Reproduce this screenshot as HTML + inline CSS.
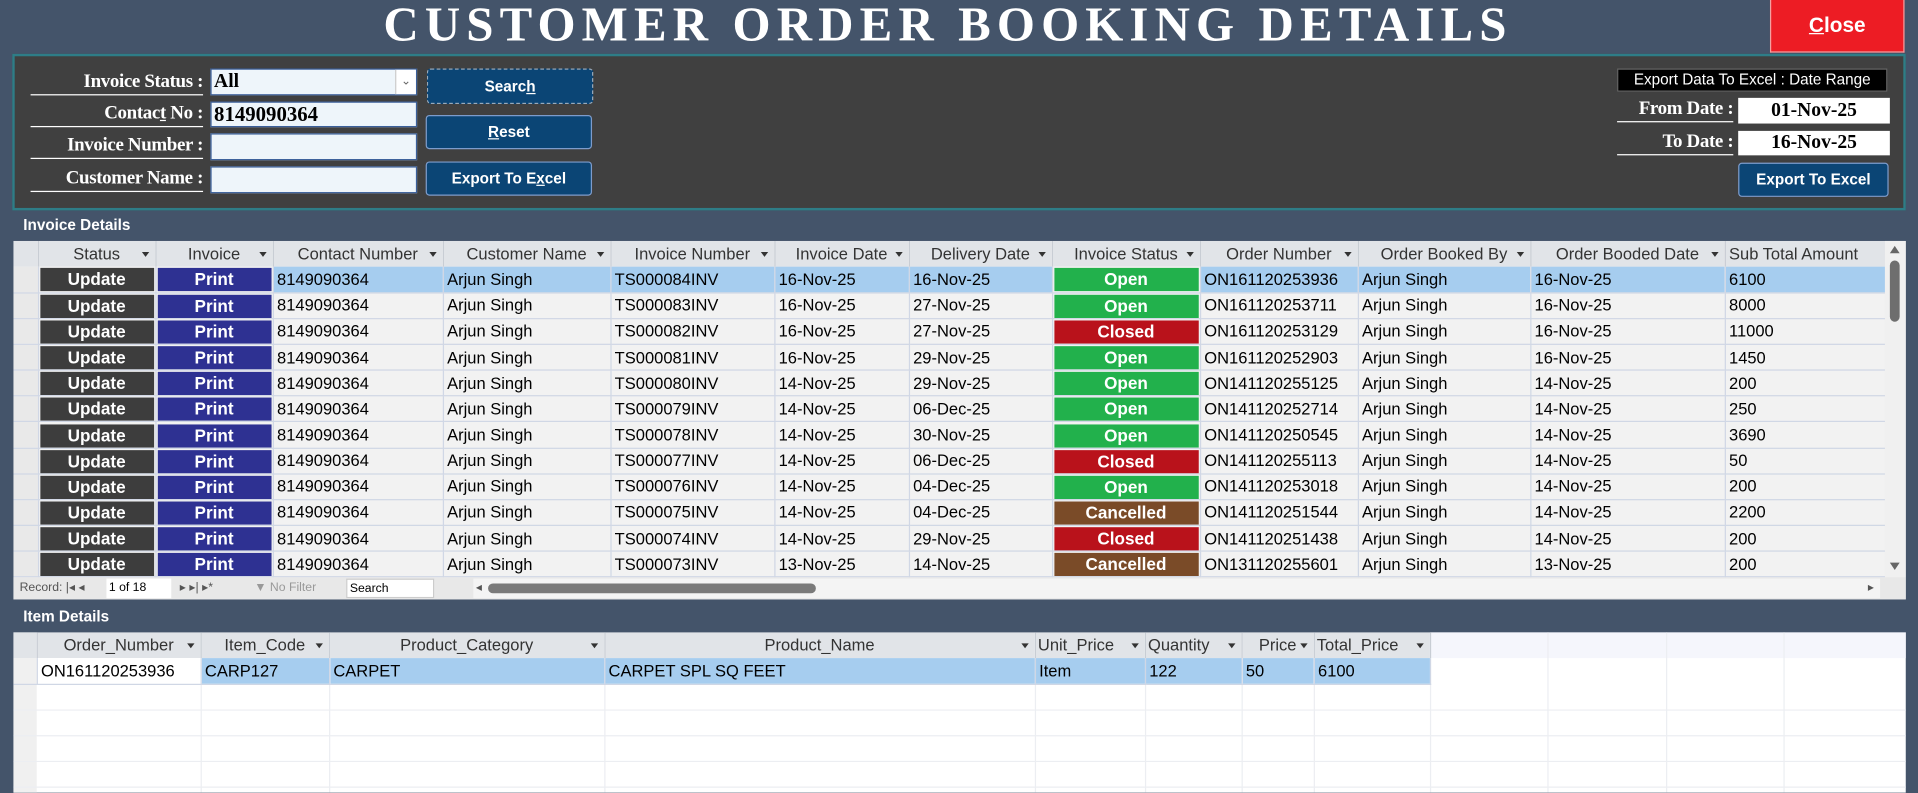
<!DOCTYPE html>
<html><head><meta charset="utf-8"><style>
*{box-sizing:border-box;margin:0;padding:0}
html,body{width:1918px;height:793px;overflow:hidden;background:#44546a}
#w{position:absolute;left:0;top:0;width:1568px;height:648px;transform:scale(1.22321);transform-origin:0 0;font-family:"Liberation Sans",sans-serif}
.a{position:absolute}
.title{left:270px;top:-4px;width:1010px;text-align:center;color:#fff;font-family:"Liberation Serif",serif;font-weight:bold;font-size:40px;letter-spacing:5px;white-space:nowrap}
.close{left:1447px;top:0;width:110px;height:43px;background:#ed1c24;color:#fff;font:bold 17px "Liberation Sans",sans-serif;text-align:center;line-height:42px;border:1px solid #f5a0a0;border-top:none}
.panel{left:10px;top:44px;width:1548px;height:128px;background:#404040;border:2px solid #2e7d87}
.lbl{color:#fff;font:bold 15.5px "Liberation Serif",serif;text-align:right;border-bottom:1.5px solid #fff;white-space:nowrap;letter-spacing:-0.3px}
.inp{background:#eef5fa;border:1px solid #3a5f9a;font:bold 16px "Liberation Serif",serif;color:#000;padding-left:2px;line-height:20px}
.btn{background:#0b4575;border:1px solid #7d9ccc;border-radius:3px;color:#fff;font:bold 12.5px "Liberation Sans",sans-serif;text-align:center}
.sec{color:#fff;font:bold 12.5px "Liberation Sans",sans-serif}
table{border-collapse:collapse;table-layout:fixed;position:absolute}
td{border-right:1px solid #d0d7e5;border-bottom:1px solid #d0d7e5;white-space:nowrap;overflow:hidden;font-size:13.5px;color:#000;padding:0 0 0 3px;line-height:19px;height:21px}
th{background:#e1e4e8;font-weight:normal;font-size:13.5px;color:#333;border-right:1px solid #c8cdd4;white-space:nowrap;overflow:hidden;text-align:center;height:21px;position:relative;line-height:20px}
th i{position:absolute;right:5px;top:9px;border-left:3px solid transparent;border-right:3px solid transparent;border-top:4px solid #333}
td.sel{background:#e9e9e9;padding:0}
td.b{padding:1px 1px 0 1px}
td.b div{height:19px;color:#fff;font-weight:bold;text-align:center;line-height:19px;font-size:14px}
.up{background:#3d3d3d}.pr{background:#2e3192}.op{background:#22b14c}.cl{background:#b9121b}.ca{background:#7a4b28}
tr.hl td:not(.sel):not(.b){background:#a6cdef}
tr.ev td:not(.sel):not(.b){background:#f2f2f2}
#g1 tr{height:21.17px}
#g1 td{height:21.17px}
</style></head><body><div id="w">
<div class="a title">CUSTOMER ORDER BOOKING DETAILS</div>
<div class="a close"><u>C</u>lose</div>
<div class="a panel"></div>
<div class="a lbl" style="left:25px;top:58px;width:141px;height:20px">Invoice Status :</div>
<div class="a lbl" style="left:25px;top:84px;width:141px;height:20px">Contac<u>t</u> No :</div>
<div class="a lbl" style="left:25px;top:110px;width:141px;height:20px">Invoice Number :</div>
<div class="a lbl" style="left:25px;top:137px;width:141px;height:20px">Customer Name :</div>
<div class="a inp" style="left:172px;top:56px;width:169px;height:22px">All<span style="position:absolute;right:0;top:0;width:17px;height:20px;background:#fff;border-left:1px solid #ccc;font:10px sans-serif;color:#666;text-align:center;line-height:20px">&#8964;</span></div>
<div class="a inp" style="left:172px;top:83px;width:169px;height:21px;font-size:17px">8149090364</div>
<div class="a inp" style="left:172px;top:109px;width:169px;height:22px"></div>
<div class="a inp" style="left:172px;top:136px;width:169px;height:22px"></div>
<div class="a btn" style="left:349px;top:56px;width:136px;height:29px;line-height:28px;border:1px dashed #9ab">Searc<u>h</u></div>
<div class="a btn" style="left:348px;top:94px;width:136px;height:28px;line-height:27px"><u>R</u>eset</div>
<div class="a btn" style="left:348px;top:132px;width:136px;height:28px;line-height:27px">Export To E<u>x</u>cel</div>
<div class="a" style="left:1322px;top:56px;width:221px;height:19px;background:#000;border:1px solid #666;color:#fff;font:12.5px 'Liberation Sans',sans-serif;text-align:center;line-height:17px;white-space:nowrap">Export Data To Excel : Date Range</div>
<div class="a lbl" style="left:1322px;top:80px;width:95px;height:20px;font-size:15.5px">From Date :</div>
<div class="a lbl" style="left:1322px;top:107px;width:95px;height:20px;font-size:15.5px">To Date :</div>
<div class="a" style="left:1421px;top:80px;width:124px;height:21px;background:#fff;font:bold 16px 'Liberation Serif',serif;text-align:center;line-height:21px">01-Nov-25</div>
<div class="a" style="left:1421px;top:107px;width:124px;height:20px;background:#fff;font:bold 16px 'Liberation Serif',serif;text-align:center;line-height:20px">16-Nov-25</div>
<div class="a btn" style="left:1421px;top:133px;width:123px;height:28px;line-height:27px">Export To Excel</div>
<div class="a sec" style="left:19px;top:177px">Invoice Details</div>
<div class="a" style="left:11px;top:197px;width:1547px;height:293px;background:#f2f2f2"></div>
<div class="a" style="left:11px;top:197px;width:1530px;height:275px;overflow:hidden">
<table id="g1" style="left:0;top:0;width:1530px">
<colgroup><col style="width:20px"><col style="width:96px"><col style="width:96px"><col style="width:139px"><col style="width:137px"><col style="width:134px"><col style="width:110px"><col style="width:117px"><col style="width:121px"><col style="width:129px"><col style="width:141px"><col style="width:159px"><col style="width:131px"></colgroup>
<tr style="height:21px"><th></th><th>Status<i></i></th><th>Invoice<i></i></th><th>Contact Number<i></i></th><th>Customer Name<i></i></th><th>Invoice Number<i></i></th><th>Invoice Date<i></i></th><th>Delivery Date<i></i></th><th>Invoice Status<i></i></th><th>Order Number<i></i></th><th>Order Booked By<i></i></th><th>Order Booded Date<i></i></th><th style="text-align:left;padding-left:3px">Sub Total Amount</th></tr>
<tr class="hl"><td class="sel"></td><td class="b"><div class="up">Update</div></td><td class="b"><div class="pr">Print</div></td><td>8149090364</td><td>Arjun Singh</td><td>TS000084INV</td><td>16-Nov-25</td><td>16-Nov-25</td><td class="b"><div class="op">Open</div></td><td>ON161120253936</td><td>Arjun Singh</td><td>16-Nov-25</td><td>6100</td></tr>
<tr class="ev"><td class="sel"></td><td class="b"><div class="up">Update</div></td><td class="b"><div class="pr">Print</div></td><td>8149090364</td><td>Arjun Singh</td><td>TS000083INV</td><td>16-Nov-25</td><td>27-Nov-25</td><td class="b"><div class="op">Open</div></td><td>ON161120253711</td><td>Arjun Singh</td><td>16-Nov-25</td><td>8000</td></tr>
<tr><td class="sel"></td><td class="b"><div class="up">Update</div></td><td class="b"><div class="pr">Print</div></td><td>8149090364</td><td>Arjun Singh</td><td>TS000082INV</td><td>16-Nov-25</td><td>27-Nov-25</td><td class="b"><div class="cl">Closed</div></td><td>ON161120253129</td><td>Arjun Singh</td><td>16-Nov-25</td><td>11000</td></tr>
<tr class="ev"><td class="sel"></td><td class="b"><div class="up">Update</div></td><td class="b"><div class="pr">Print</div></td><td>8149090364</td><td>Arjun Singh</td><td>TS000081INV</td><td>16-Nov-25</td><td>29-Nov-25</td><td class="b"><div class="op">Open</div></td><td>ON161120252903</td><td>Arjun Singh</td><td>16-Nov-25</td><td>1450</td></tr>
<tr><td class="sel"></td><td class="b"><div class="up">Update</div></td><td class="b"><div class="pr">Print</div></td><td>8149090364</td><td>Arjun Singh</td><td>TS000080INV</td><td>14-Nov-25</td><td>29-Nov-25</td><td class="b"><div class="op">Open</div></td><td>ON141120255125</td><td>Arjun Singh</td><td>14-Nov-25</td><td>200</td></tr>
<tr class="ev"><td class="sel"></td><td class="b"><div class="up">Update</div></td><td class="b"><div class="pr">Print</div></td><td>8149090364</td><td>Arjun Singh</td><td>TS000079INV</td><td>14-Nov-25</td><td>06-Dec-25</td><td class="b"><div class="op">Open</div></td><td>ON141120252714</td><td>Arjun Singh</td><td>14-Nov-25</td><td>250</td></tr>
<tr><td class="sel"></td><td class="b"><div class="up">Update</div></td><td class="b"><div class="pr">Print</div></td><td>8149090364</td><td>Arjun Singh</td><td>TS000078INV</td><td>14-Nov-25</td><td>30-Nov-25</td><td class="b"><div class="op">Open</div></td><td>ON141120250545</td><td>Arjun Singh</td><td>14-Nov-25</td><td>3690</td></tr>
<tr class="ev"><td class="sel"></td><td class="b"><div class="up">Update</div></td><td class="b"><div class="pr">Print</div></td><td>8149090364</td><td>Arjun Singh</td><td>TS000077INV</td><td>14-Nov-25</td><td>06-Dec-25</td><td class="b"><div class="cl">Closed</div></td><td>ON141120255113</td><td>Arjun Singh</td><td>14-Nov-25</td><td>50</td></tr>
<tr><td class="sel"></td><td class="b"><div class="up">Update</div></td><td class="b"><div class="pr">Print</div></td><td>8149090364</td><td>Arjun Singh</td><td>TS000076INV</td><td>14-Nov-25</td><td>04-Dec-25</td><td class="b"><div class="op">Open</div></td><td>ON141120253018</td><td>Arjun Singh</td><td>14-Nov-25</td><td>200</td></tr>
<tr class="ev"><td class="sel"></td><td class="b"><div class="up">Update</div></td><td class="b"><div class="pr">Print</div></td><td>8149090364</td><td>Arjun Singh</td><td>TS000075INV</td><td>14-Nov-25</td><td>04-Dec-25</td><td class="b"><div class="ca">Cancelled</div></td><td>ON141120251544</td><td>Arjun Singh</td><td>14-Nov-25</td><td>2200</td></tr>
<tr><td class="sel"></td><td class="b"><div class="up">Update</div></td><td class="b"><div class="pr">Print</div></td><td>8149090364</td><td>Arjun Singh</td><td>TS000074INV</td><td>14-Nov-25</td><td>29-Nov-25</td><td class="b"><div class="cl">Closed</div></td><td>ON141120251438</td><td>Arjun Singh</td><td>14-Nov-25</td><td>200</td></tr>
<tr class="ev"><td class="sel"></td><td class="b"><div class="up">Update</div></td><td class="b"><div class="pr">Print</div></td><td>8149090364</td><td>Arjun Singh</td><td>TS000073INV</td><td>13-Nov-25</td><td>14-Nov-25</td><td class="b"><div class="ca">Cancelled</div></td><td>ON131120255601</td><td>Arjun Singh</td><td>13-Nov-25</td><td>200</td></tr>
</table></div>
<div class="a" style="left:1541px;top:197px;width:17px;height:275px;background:#f0f0f0"></div>
<div class="a" style="left:1545px;top:213px;width:8px;height:50px;background:#6e6e6e;border-radius:4px"></div>
<div class="a" style="left:1545px;top:201px;border-left:4px solid transparent;border-right:4px solid transparent;border-bottom:6px solid #666"></div>
<div class="a" style="left:1545px;top:460px;border-left:4px solid transparent;border-right:4px solid transparent;border-top:6px solid #666"></div>
<div class="a" style="left:11px;top:472px;width:1547px;height:18px;background:#e8e8e8;font:10px 'Liberation Sans',sans-serif;color:#555;line-height:18px">
<span class="a" style="left:5px">Record: |◂ ◂</span>
<span class="a" style="left:76px;top:1px;width:53px;height:16px;background:#fff;color:#000;line-height:16px;padding-left:2px">1 of 18</span>
<span class="a" style="left:136px">▸ ▸| ▸*</span>
<span class="a" style="left:197px;color:#999">&#9660; No Filter</span>
<span class="a" style="left:272px;top:1px;width:72px;height:16px;background:#fff;color:#000;line-height:16px;padding-left:2px;border:1px solid #ccc">Search</span>
<span class="a" style="left:376px;top:1px;width:1150px;height:16px;background:#f4f4f4"></span>
<span class="a" style="left:378px;top:0;color:#555">◂</span>
<span class="a" style="left:388px;top:5px;width:268px;height:8px;background:#7a7a7a;border-radius:4px"></span>
<span class="a" style="left:1516px;top:0">▸</span>
</div>
<div class="a sec" style="left:19px;top:497px">Item Details</div>
<div class="a" style="left:11px;top:517px;width:1547px;height:131px;background:#fff"></div>
<div class="a" style="left:1169px;top:517px;width:389px;height:21px;background:#f5f6fc"></div>
<div class="a" style="left:11px;top:517px;width:19px;height:131px;background:#f0f0f0"></div>
<svg class="a" style="left:0;top:0" width="1568" height="648">
<g stroke="#eceef2" stroke-width="1">
<line x1="1265.5" y1="517" x2="1265.5" y2="648"/><line x1="1362.5" y1="517" x2="1362.5" y2="648"/><line x1="1458.5" y1="517" x2="1458.5" y2="648"/>
<line x1="164.5" y1="559" x2="164.5" y2="648"/><line x1="269.5" y1="559" x2="269.5" y2="648"/><line x1="494.5" y1="559" x2="494.5" y2="648"/><line x1="846.5" y1="559" x2="846.5" y2="648"/><line x1="936.5" y1="559" x2="936.5" y2="648"/><line x1="1015.5" y1="559" x2="1015.5" y2="648"/><line x1="1074.5" y1="559" x2="1074.5" y2="648"/><line x1="1169.5" y1="559" x2="1169.5" y2="648"/>
<line x1="11" y1="580.5" x2="1558" y2="580.5"/><line x1="11" y1="601.5" x2="1558" y2="601.5"/><line x1="11" y1="622.5" x2="1558" y2="622.5"/><line x1="11" y1="643.5" x2="1558" y2="643.5"/>
</g></svg>
<table style="left:11px;top:517px;width:1158px">
<colgroup><col style="width:19px"><col style="width:134px"><col style="width:105px"><col style="width:225px"><col style="width:352px"><col style="width:90px"><col style="width:79px"><col style="width:59px"><col style="width:95px"></colgroup>
<tr><th></th><th>Order_Number<i></i></th><th>Item_Code<i></i></th><th>Product_Category<i></i></th><th>Product_Name<i></i></th><th style="text-align:left;padding-left:2px">Unit_Price<i></i></th><th style="text-align:left;padding-left:2px">Quantity<i></i></th><th>Price<i></i></th><th style="text-align:left;padding-left:2px">Total_Price<i></i></th></tr>
<tr class="hl"><td class="sel" style="background:#f0f0f0"></td><td style="background:#fff">ON161120253936</td><td>CARP127</td><td>CARPET</td><td>CARPET SPL SQ FEET</td><td>Item</td><td>122</td><td>50</td><td>6100</td></tr>
</table>
</div></body></html>
